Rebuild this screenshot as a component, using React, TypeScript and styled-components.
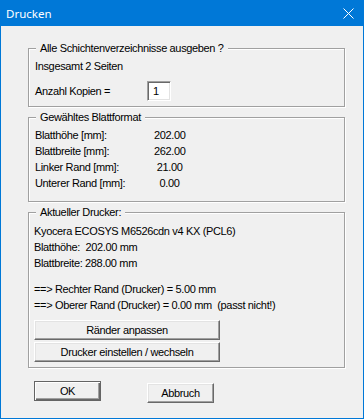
import React from "react";
import styled, { createGlobalStyle } from "styled-components";

const Global = createGlobalStyle`
  html, body { margin: 0; padding: 0; background: #f0f0f0; }
  * { box-sizing: border-box; }
`;

const Window = styled.div`
  width: 364px;
  height: 419px;
  display: flex;
  flex-direction: column;
  background: #f0f0f0;
  border: 1px solid #0078d7;
  border-top: none;
  font-family: "Liberation Sans", Arial, sans-serif;
  font-size: 11px;
  letter-spacing: -0.35px;
  color: #000;
`;

const TitleBar = styled.div`
  height: 26px;
  margin: 0 -1px;
  background: #0078d7;
  display: flex;
  align-items: center;
  justify-content: space-between;
  padding: 0 10px 0 6px;
  color: #fff;
  font-family: "Noto Sans", "Open Sans", sans-serif;
  font-size: 11.5px;
  letter-spacing: 0;
`;

const Body = styled.div`
  display: flex;
  flex-direction: column;
  padding: 22px 18px 0 27px;
`;

const GroupBox = styled.div<{ $pad: string }>`
  position: relative;
  width: 317px;
  border: 1px solid #a0a0a0;
  box-shadow: inset 1px 1px #fff, 1px 1px #fff;
  padding: ${(p) => p.$pad};
  & + & { margin-top: 10px; }
`;

const Caption = styled.span`
  position: absolute;
  top: -7px;
  left: 7px;
  padding: 0 4px;
  line-height: 13px;
  background: #f0f0f0;
`;

const Line = styled.div<{ $h?: number }>`
  height: ${(p) => p.$h ?? 16}px;
  line-height: ${(p) => p.$h ?? 16}px;
  white-space: pre;
`;

const Row = styled.div`
  display: flex;
  align-items: center;
  margin-top: 8px;
`;

const Label = styled.span<{ $w: number }>`
  width: ${(p) => p.$w}px;
  white-space: pre;
`;

const Input = styled.div`
  width: 24px;
  height: 20px;
  background: #fff;
  border: 1px solid;
  border-color: #a0a0a0 #fff #fff #a0a0a0;
  box-shadow: inset 1px 1px #696969, inset -1px -1px #e3e3e3;
  padding: 3px 0 0 5px;
  line-height: 13px;
`;

const Table = styled.div`
  display: grid;
  grid-template-columns: 119px auto;
  grid-auto-rows: 16px;
  align-items: center;
  white-space: pre;
`;

const Spacer = styled.div<{ $h: number }>`
  height: ${(p) => p.$h}px;
`;

const Button = styled.button<{ $w: number; $default?: boolean }>`
  display: block;
  width: ${(p) => p.$w}px;
  height: 20px;
  margin: 0;
  padding: 0;
  background: #f0f0f0;
  font: inherit;
  letter-spacing: inherit;
  color: #000;
  line-height: 16px;
  text-align: center;
  border: 1px solid;
  border-color: ${(p) => (p.$default ? "#646464" : "#fff #696969 #696969 #fff")};
  box-shadow: ${(p) =>
    p.$default
      ? "inset 1px 1px #fff, inset -1px -1px #696969, inset -2px -2px #a0a0a0"
      : "inset -1px -1px #a0a0a0, inset 1px 1px #e3e3e3"};
  & + & { margin-top: 2px; }
`;

const Footer = styled.div`
  display: flex;
  gap: 46px;
  padding: 13px 0 0 33px;
`;

const CloseIcon = () => (
  <svg width="11" height="11" viewBox="0 0 11 11">
    <path d="M0.5 0.5 L10.5 10.5 M10.5 0.5 L0.5 10.5" stroke="#fff" strokeWidth="1" />
  </svg>
);

export default function App() {
  return (
    <>
      <Global />
      <Window>
        <TitleBar>
          <span>Drucken</span>
          <CloseIcon />
        </TitleBar>
        <Body>
          <GroupBox $pad="11px 6px 5px">
            <Caption>Alle Schichtenverzeichnisse ausgeben ?</Caption>
            <Line $h={13}>Insgesamt 2 Seiten</Line>
            <Row>
              <Label $w={112}>Anzahl Kopien =</Label>
              <Input>1</Input>
            </Row>
          </GroupBox>
          <GroupBox $pad="9px 6px 10px">
            <Caption>Gewähltes Blattformat</Caption>
            <Table>
              <span>Blatthöhe [mm]:</span><span>202.00</span>
              <span>Blattbreite [mm]:</span><span>262.00</span>
              <span>Linker Rand [mm]:</span><span> 21.00</span>
              <span>Unterer Rand [mm]:</span><span>  0.00</span>
            </Table>
          </GroupBox>
          <GroupBox $pad="10px 5px 5px">
            <Caption>Aktueller Drucker:</Caption>
            <Line>Kyocera ECOSYS M6526cdn v4 KX (PCL6)</Line>
            <Line>{"Blatthöhe:  202.00 mm"}</Line>
            <Line>{"Blattbreite: 288.00 mm"}</Line>
            <Spacer $h={10} />
            <Line>{"==> Rechter Rand (Drucker) = 5.00 mm"}</Line>
            <Line>{"==> Oberer Rand (Drucker) = 0.00 mm  (passt nicht!)"}</Line>
            <Spacer $h={7} />
            <Button $w={186}>Ränder anpassen</Button>
            <Button $w={186}>Drucker einstellen / wechseln</Button>
          </GroupBox>
        </Body>
        <Footer>
          <Button $w={67} $default>OK</Button>
          <Button $w={67}>Abbruch</Button>
        </Footer>
      </Window>
    </>
  );
}
